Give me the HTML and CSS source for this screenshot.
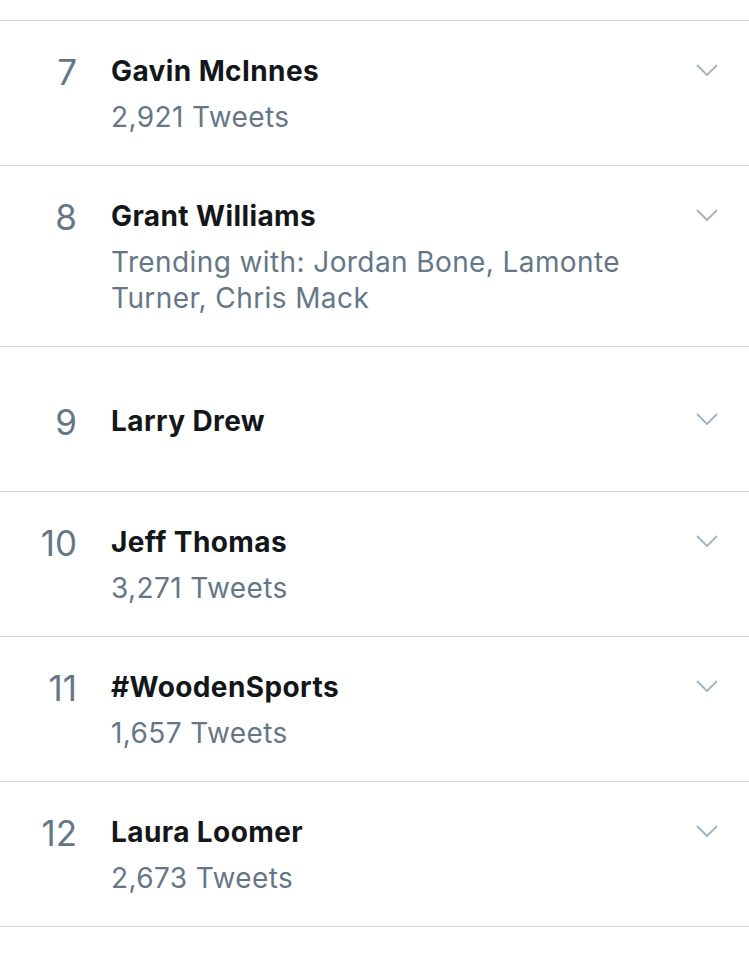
FILE: index.html
```html
<!DOCTYPE html>
<html lang="en">
<head>
<meta charset="utf-8">
<title>Trends</title>
<link rel="stylesheet" href="styles.css">
</head>
<body>
<ol class="trends">
  <li class="trend">
    <span class="rank">7</span>
    <span class="name">Gavin McInnes</span>
    <svg class="chev" viewBox="0 0 22 12" width="22" height="12"><path d="M1 1 L11 11 L21 1"/></svg>
    <span class="meta">2,921 Tweets</span>
  </li>
  <li class="trend">
    <span class="rank">8</span>
    <span class="name">Grant Williams</span>
    <svg class="chev" viewBox="0 0 22 12" width="22" height="12"><path d="M1 1 L11 11 L21 1"/></svg>
    <span class="meta">Trending with: Jordan Bone, Lamonte Turner, Chris Mack</span>
  </li>
  <li class="trend">
    <span class="rank">9</span>
    <span class="name">Larry Drew</span>
    <svg class="chev" viewBox="0 0 22 12" width="22" height="12"><path d="M1 1 L11 11 L21 1"/></svg>
  </li>
  <li class="trend">
    <span class="rank">10</span>
    <span class="name">Jeff Thomas</span>
    <svg class="chev" viewBox="0 0 22 12" width="22" height="12"><path d="M1 1 L11 11 L21 1"/></svg>
    <span class="meta">3,271 Tweets</span>
  </li>
  <li class="trend">
    <span class="rank">11</span>
    <span class="name">#WoodenSports</span>
    <svg class="chev" viewBox="0 0 22 12" width="22" height="12"><path d="M1 1 L11 11 L21 1"/></svg>
    <span class="meta">1,657 Tweets</span>
  </li>
  <li class="trend">
    <span class="rank">12</span>
    <span class="name">Laura Loomer</span>
    <svg class="chev" viewBox="0 0 22 12" width="22" height="12"><path d="M1 1 L11 11 L21 1"/></svg>
    <span class="meta">2,673 Tweets</span>
  </li>
</ol>
</body>
</html>
```
FILE: styles.css
```css
html, body {
  margin: 0;
  padding: 0;
  background: #ffffff;
}
body {
  font-family: Inter, "Liberation Sans", Arial, sans-serif;
  -webkit-font-smoothing: antialiased;
}
.trends {
  list-style: none;
  margin: 0;
  padding: 20px 0 0;
}
.trend {
  display: grid;
  grid-template-columns: 77px 1fr 22px;
  column-gap: 34px;
  align-content: center;
  box-sizing: border-box;
  min-height: 145px;
  padding: 33px 31px 30px 0;
  border-top: 1px solid #d3d6da;
}
.trend:last-child {
  border-bottom: 1px solid #d3d6da;
}
.rank {
  grid-column: 1;
  grid-row: 1;
  text-align: right;
  font-size: 35px;
  line-height: 34px;
  color: #657786;
  align-self: center;
  position: relative;
  top: 1px;
}
.name {
  grid-column: 2;
  grid-row: 1;
  font-size: 28px;
  font-weight: 700;
  letter-spacing: 0.4px;
  line-height: 34px;
  color: #14171a;
}
.chev {
  grid-column: 3;
  grid-row: 1;
  align-self: center;
  margin-top: -3px;
  fill: none;
  stroke: #a9b4be;
  stroke-width: 2;
}
.meta {
  grid-column: 2;
  grid-row: 2;
  margin-top: 11px;
  font-size: 28px;
  letter-spacing: 0.4px;
  line-height: 36px;
  color: #657786;
}
```
